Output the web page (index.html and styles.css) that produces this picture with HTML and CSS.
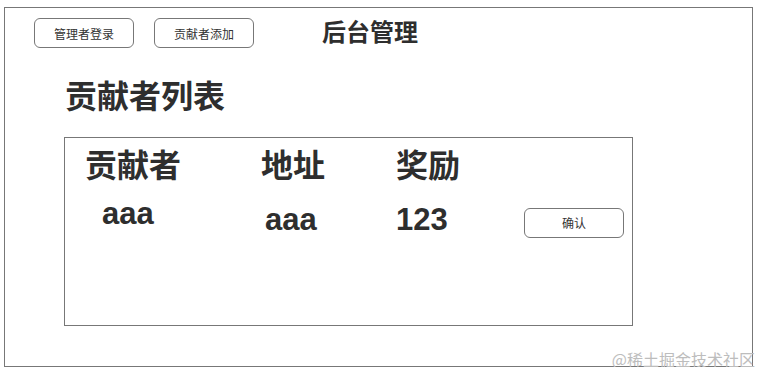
FILE: index.html
```html
<!DOCTYPE html>
<html lang="zh-CN">
<head>
    <meta charset="UTF-8">
    <meta name="viewport" content="width=device-width, initial-scale=1.0">
    <title>后台管理</title>
    <link rel="stylesheet" href="styles.css">
</head>
<body>
    <div class="frame">
        <div class="topbar">
            <button type="button" class="btn">管理者登录</button>
            <button type="button" class="btn">贡献者添加</button>
            <h2 class="title">后台管理</h2>
        </div>
        <h1 class="list-title">贡献者列表</h1>
        <div class="list-box">
            <div class="row head">
                <div class="cell">贡献者</div>
                <div class="cell">地址</div>
                <div class="cell">奖励</div>
            </div>
            <div class="row item">
                <div class="cell name">aaa</div>
                <div class="cell addr">aaa</div>
                <div class="cell reward">123</div>
                <div class="cell action">
                    <button type="button" class="btn">确认</button>
                </div>
            </div>
        </div>
        <span class="watermark">@稀土掘金技术社区</span>
    </div>
</body>
</html>
```

FILE: styles.css
```css
*{
    margin:0;
    padding:0;
    box-sizing:border-box;
}
body{
    font-family:"Liberation Sans", "Noto Sans CJK SC", sans-serif;
    color:#2e2e2e;
    background:#fff;
}
.frame{
    position:relative;
    margin:7px 0 0 4px;
    width:749px;
    height:360px;
    border:1px solid #777;
}
.topbar{
    display:flex;
    align-items:center;
    padding:10px 0 0 29px;
}
.btn{
    width:100px;
    height:30px;
    border:1px solid #777;
    border-radius:6px;
    background:#fff;
    color:#333;
    font-family:"Noto Sans CJK SC", sans-serif;
    font-size:12px;
}
.topbar .btn + .btn{
    margin-left:20px;
}
.title{
    margin-left:68px;
    font-size:24px;
    line-height:28px;
    font-weight:bold;
}
.list-title{
    margin:29px 0 0 60px;
    font-size:32px;
    line-height:40px;
    font-weight:bold;
}
.list-box{
    margin:20px 0 0 59px;
    width:569px;
    height:189px;
    border:1px solid #777;
    padding:8px 0 0 20px;
}
.row{
    display:grid;
    grid-template-columns:176px 135px 128px 100px;
    align-items:end;
}
.head .cell{
    font-size:32px;
    line-height:40px;
    font-weight:bold;
}
.item{
    margin-top:10px;
}
.item .cell{
    font-size:31px;
    line-height:36px;
    font-weight:bold;
}
.item .name{
    padding:0 0 6px 17px;
}
.item .addr{
    padding-left:4px;
}
.item .action{
    align-self:start;
    padding-top:7px;
    line-height:30px;
}
.watermark{
    position:absolute;
    right:-3px;
    bottom:-1px;
    font-family:"Noto Sans CJK SC", sans-serif;
    font-size:16px;
    line-height:16px;
    color:#bdbdbd;
}
```
